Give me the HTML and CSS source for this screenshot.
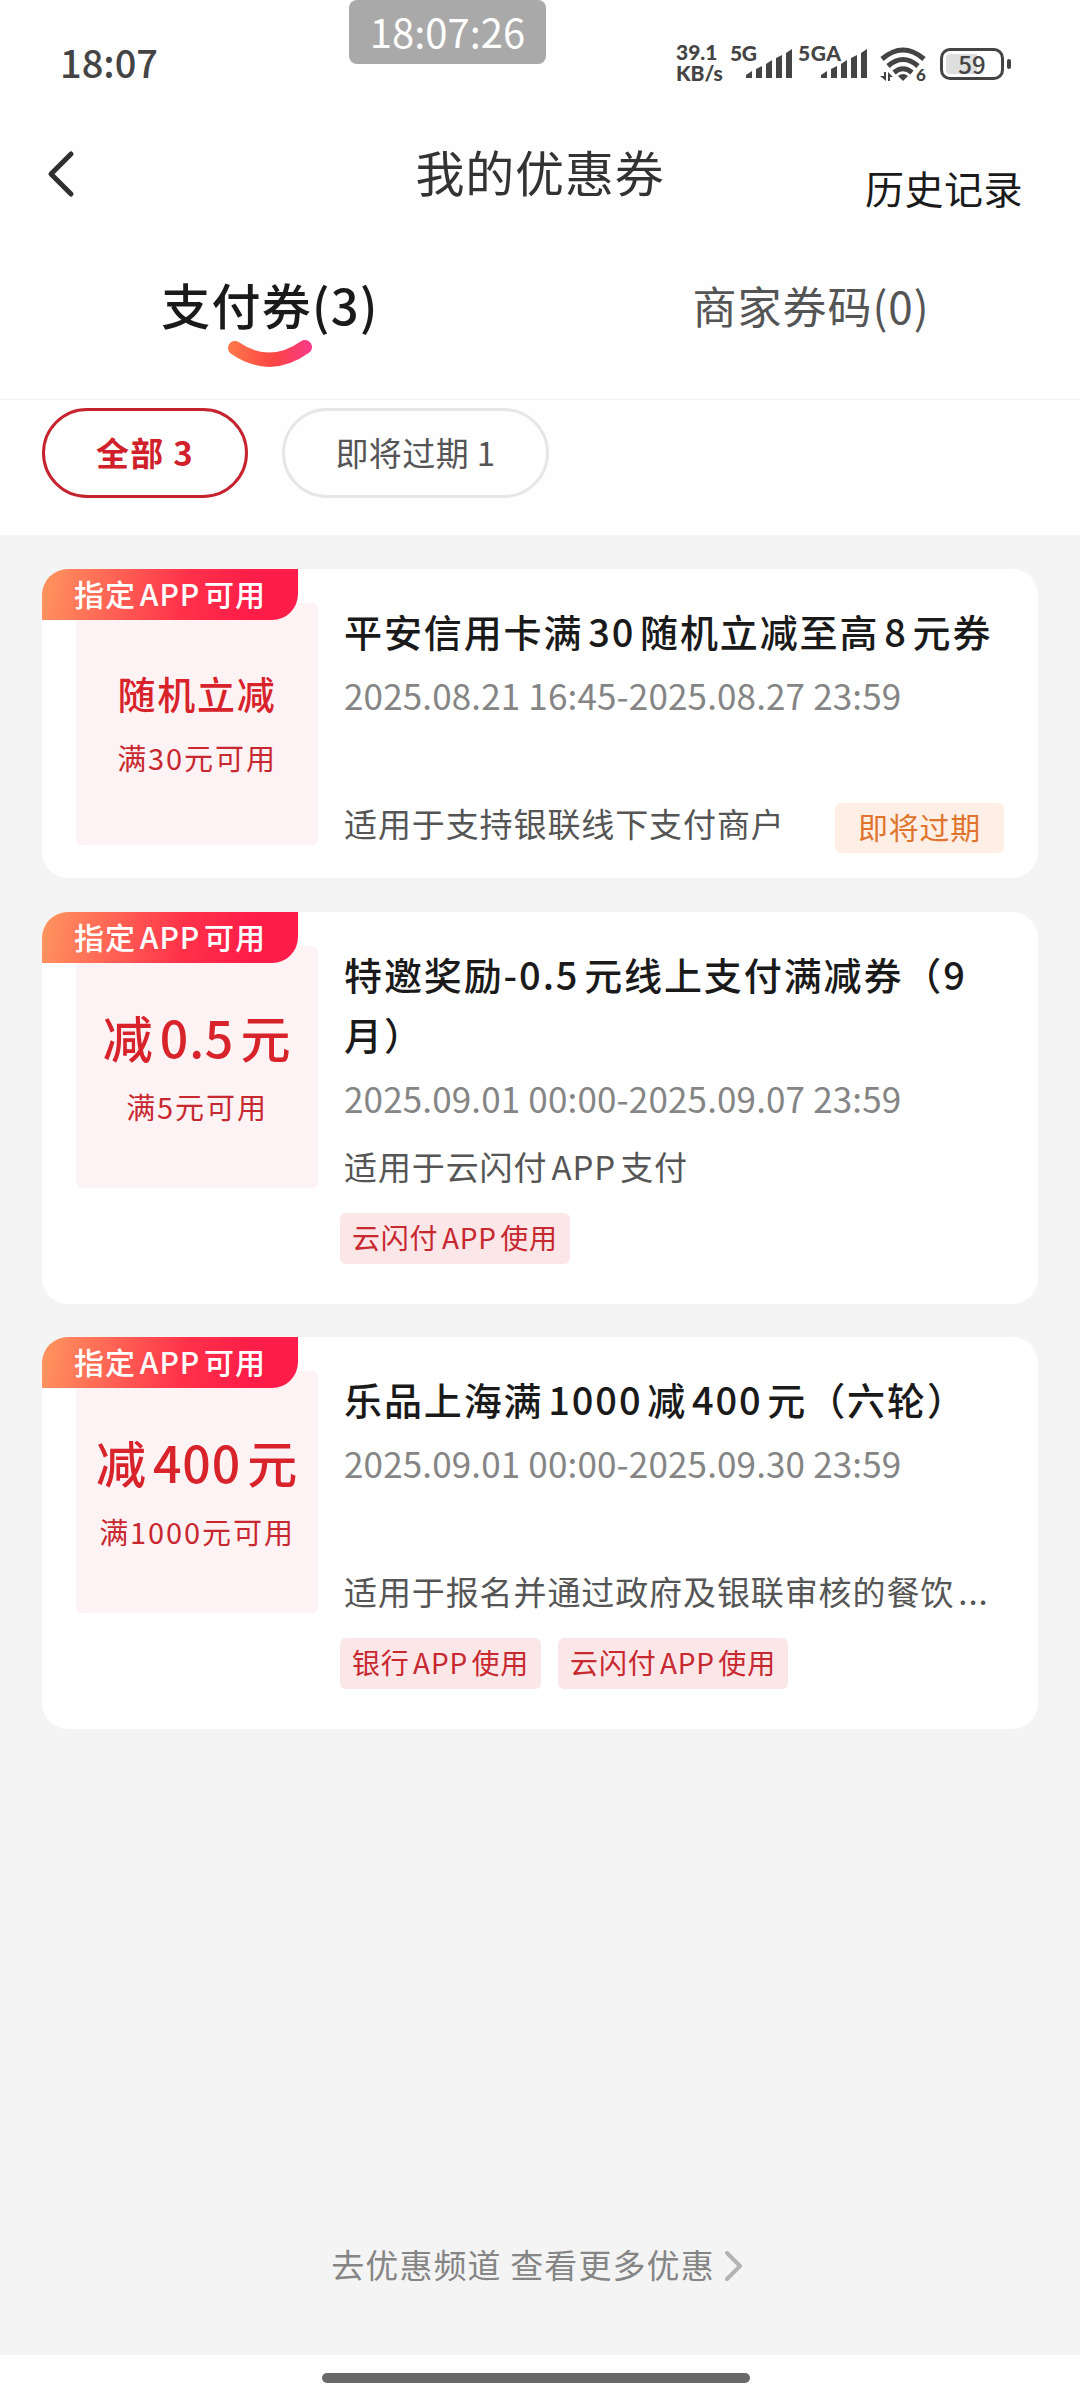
FILE: index.html
```html
<!DOCTYPE html>
<html lang="zh-CN">
<head>
    <meta charset="UTF-8">
    <meta name="viewport" content="width=device-width, initial-scale=1.0">
    <title>我的优惠券</title>
    <link rel="stylesheet" href="styles.css">
</head>
<body>
    <div class="clock-badge">18:07:26</div>

    <div class="status-bar">
        <div class="status-time">18:07</div>
        <div class="status-icons">
            <div class="net-speed"><span>39.1</span><span>KB/s</span></div>
            <svg class="signal" width="63" height="40" viewBox="0 0 63 40">
                <text x="0" y="20" class="net-label" textLength="27">5G</text>
                <path d="M16 37v-3l6-4v7zM26 37V28l6-3v12zM36 37V23l6-4v18zM46 37V17l6-3v23zM56 37V12l6-4v29z" />
            </svg>
            <svg class="signal" width="70" height="40" viewBox="0 0 70 40">
                <text x="0" y="20" class="net-label" textLength="43">5GA</text>
                <path d="M23 37v-3l6-4v7zM33 37V28l6-3v12zM43 37V23l6-4v18zM53 37V17l6-3v23zM63 37V12l6-4v29z" />
            </svg>
            <svg class="wifi" width="48" height="42" viewBox="0 0 48 42">
                <g fill="none" stroke="#444" stroke-width="5">
                    <path d="M2 18Q23 0 44 18" />
                    <path d="M8 25Q23 12 38 25" />
                    <path d="M14 31.5Q23 24 32 31.5" />
                </g>
                <path d="M18 35q5-4 10 0l-5 5z" />
                <path d="M4 31h2v9L0 35h4zM8 40V31l5 5h-3v4z" />
                <text x="36" y="40" class="wifi-gen">6</text>
            </svg>
            <div class="battery"><span>59</span></div>
            <div class="battery-tip"></div>
        </div>
    </div>

    <div class="nav">
        <svg class="back" width="30" height="48" viewBox="0 0 30 48">
            <path d="M26 4L6 24l20 20" fill="none" stroke="#2f2f2f" stroke-width="5" stroke-linecap="round" stroke-linejoin="round" />
        </svg>
        <h1>我的优惠券</h1>
        <a class="history">历史记录</a>
    </div>

    <div class="tabs">
        <div class="tab active">
            <span>支付券(3)</span>
            <svg class="smile" width="86" height="28" viewBox="0 0 86 28">
                <defs>
                    <linearGradient id="smile" gradientUnits="userSpaceOnUse" x1="0" x2="86" y1="0" y2="0">
                        <stop offset="0" stop-color="#ff7a4a" />
                        <stop offset=".55" stop-color="#fb4444" />
                        <stop offset="1" stop-color="#f93a8c" />
                    </linearGradient>
                </defs>
                <path d="M8 8Q43 32 78 7" fill="none" stroke="url(#smile)" stroke-width="14" stroke-linecap="round" />
            </svg>
        </div>
        <div class="tab"><span>商家券码(0)</span></div>
    </div>

    <div class="filters">
        <div class="pill selected">全部 3</div>
        <div class="pill">即将过期 1</div>
    </div>

    <div class="content">
        <div class="coupon">
            <div class="ribbon">指定APP可用</div>
            <div class="amount">
                <div class="value small">随机立减</div>
                <div class="limit">满30元可用</div>
            </div>
            <div class="info">
                <div class="main">
                    <h2>平安信用卡满30随机立减至高8元券</h2>
                    <div class="date">2025.08.21 16:45-2025.08.27 23:59</div>
                    <div class="scope">
                        <span>适用于支持银联线下支付商户</span>
                        <span class="expiring">即将过期</span>
                    </div>
                </div>
            </div>
        </div>

        <div class="coupon">
            <div class="ribbon">指定APP可用</div>
            <div class="amount">
                <div class="value">减0.5元</div>
                <div class="limit">满5元可用</div>
            </div>
            <div class="info">
                <div class="main">
                    <h2>特邀奖励-0.5元线上支付满减券（9月）</h2>
                    <div class="date">2025.09.01 00:00-2025.09.07 23:59</div>
                    <div class="scope"><span>适用于云闪付APP支付</span></div>
                </div>
                <div class="tags">
                    <span class="tag">云闪付APP使用</span>
                </div>
            </div>
        </div>

        <div class="coupon">
            <div class="ribbon">指定APP可用</div>
            <div class="amount">
                <div class="value">减400元</div>
                <div class="limit">满1000元可用</div>
            </div>
            <div class="info">
                <div class="main">
                    <h2>乐品上海满1000减400元（六轮）</h2>
                    <div class="date">2025.09.01 00:00-2025.09.30 23:59</div>
                    <div class="scope"><span>适用于报名并通过政府及银联审核的餐饮...</span></div>
                </div>
                <div class="tags">
                    <span class="tag">银行APP使用</span>
                    <span class="tag">云闪付APP使用</span>
                </div>
            </div>
        </div>

        <div class="more">
            <span>去优惠频道 查看更多优惠</span>
            <svg width="18" height="30" viewBox="0 0 18 30">
                <path d="M2 2l13 13L2 28" fill="none" stroke="#b4b4b4" stroke-width="4" stroke-linecap="round" stroke-linejoin="round" />
            </svg>
        </div>
    </div>

    <div class="home-area"><div class="home-bar"></div></div>
</body>
</html>
```
FILE: styles.css
```css
* {
    box-sizing: border-box;
}

body {
    margin: 0;
    width: 1080px;
    height: 2400px;
    display: flex;
    flex-direction: column;
    font-family: "Noto Sans CJK SC", sans-serif;
    background: #fefefe;
    color: #1a1a1a;
    white-space: nowrap;
    text-autospace: normal;
}

h1, h2 {
    margin: 0;
    font-weight: 400;
}

/* floating clock over the status bar */
.clock-badge {
    position: absolute;
    left: 349px;
    top: 0;
    width: 197px;
    height: 64px;
    line-height: 62px;
    border-radius: 8px;
    background: #a9a9a9;
    color: #fff;
    font-size: 40px;
    text-align: center;
}

.status-bar {
    height: 120px;
    padding: 0 69px 0 60px;
    display: flex;
    justify-content: space-between;
    color: #444;
}

.status-time {
    margin-top: 32px;
    line-height: 60px;
    font-size: 38px;
    font-weight: 500;
}

.status-icons {
    display: flex;
    align-items: flex-start;
    padding-top: 41px;
}

.status-icons svg {
    fill: #444;
    overflow: visible;
}

.net-speed {
    display: flex;
    flex-direction: column;
    width: 54px;
    font: 900 21px/21px Lato, sans-serif;
}

.net-speed span {
    height: 21px;
}

.signal {
    margin-right: 5px;
}

.net-label {
    font: 900 21px Lato, sans-serif;
}

.wifi {
    margin: 0 12px 0 7px;
}

.wifi-gen {
    font: 900 17px Lato, sans-serif;
}

.battery {
    width: 64px;
    height: 32px;
    margin-top: 7px;
    border: 3px solid #444;
    border-radius: 10px;
    padding: 3px;
    font: 500 24px/20px "Noto Sans CJK SC", sans-serif;
    text-align: center;
}

.battery span {
    display: block;
    background: linear-gradient(90deg, #dedede 59%, transparent 59%);
    border-radius: 4px;
}

.battery-tip {
    width: 4px;
    height: 10px;
    margin: 18px 0 0 3px;
    border-radius: 2px;
    background: #444;
}

.nav {
    height: 120px;
    padding: 0 57px 0 57px;
    display: grid;
    grid-template-columns: 1fr auto 1fr;
    align-items: start;
}

.back {
    margin: 30px 0 0 -12px;
}

.nav h1 {
    margin-top: 21px;
    line-height: 60px;
    font-size: 49px;
    letter-spacing: 0.8px;
    color: #333;
}

.history {
    justify-self: end;
    margin-top: 37px;
    line-height: 60px;
    font-size: 39px;
    letter-spacing: 0.5px;
}

.tabs {
    height: 160px;
    border-bottom: 1px solid #f2f2f2;
    display: grid;
    grid-template-columns: 1fr 1fr;
    padding-top: 34px;
}

.tab {
    display: flex;
    flex-direction: column;
    align-items: center;
    line-height: 60px;
    font-size: 44px;
    letter-spacing: 1px;
    color: #555;
    padding: 1px 0 0 2px;
}

.tab.active {
    padding: 0;
    font-size: 49px;
    font-weight: 500;
    letter-spacing: 1.3px;
    color: #1a1a1a;
}

.smile {
    margin-top: 6px;
    overflow: visible;
}

.filters {
    height: 135px;
    padding: 8px 42px 0;
    display: flex;
    gap: 34px;
}

.pill {
    height: 90px;
    width: 267px;
    line-height: 82px;
    border: 3px solid #e6e6e6;
    border-radius: 45px;
    text-align: center;
    font-size: 33px;
    letter-spacing: 0.4px;
    color: #555;
}

.pill.selected {
    width: 206px;
    border-color: #c5242f;
    color: #d0212b;
    font-weight: 700;
    letter-spacing: 1.2px;
}

.content {
    height: 1820px;
    background: #f4f4f4;
    padding: 34px 42px 0;
    display: flex;
    flex-direction: column;
}

.coupon {
    position: relative;
    background: #fff;
    border-radius: 26px;
    margin-bottom: 34px;
    padding: 32px 34px 35px;
    display: flex;
    align-items: flex-start;
}

.coupon:nth-child(2) {
    margin-bottom: 33px;
}

.ribbon {
    position: absolute;
    left: 0;
    top: 0;
    width: 256px;
    height: 51px;
    line-height: 48px;
    border-radius: 26px 0 26px 0;
    background: linear-gradient(100deg, #ff965f 0%, #ff324a 55%, #fe1d48 80%);
    color: #fff;
    font-size: 30px;
    font-weight: 500;
    letter-spacing: 1px;
    text-align: center;
}

.amount {
    width: 242px;
    height: 242px;
    margin: 2px 0 -2px;
    border-radius: 6px;
    background: #fdf2f4;
    text-align: center;
    color: #d8232b;
    padding-top: 60px;
    text-autospace: no-autospace;
}

.value {
    height: 60px;
    line-height: 60px;
    font-size: 50px;
    font-weight: 500;
    letter-spacing: 0.8px;
    text-autospace: normal;
}

.value.small {
    font-size: 38px;
    letter-spacing: 1.7px;
    height: 54px;
}

.limit {
    margin-top: 20px;
    line-height: 40px;
    font-size: 29px;
    letter-spacing: 1.9px;
    color: #c8282f;
}

.info {
    flex: 1;
    min-width: 0;
    padding-left: 26px;
}

.main {
    min-height: 242px;
    display: flex;
    flex-direction: column;
}

.main h2 {
    line-height: 60px;
    font-size: 38px;
    font-weight: 500;
    letter-spacing: 1.9px;
    white-space: normal;
}

.date {
    margin-top: 14px;
    line-height: 40px;
    font-size: 35px;
    letter-spacing: 0.15px;
    color: #858585;
}

.scope {
    margin-top: auto;
    height: 40px;
    line-height: 40px;
    display: flex;
    justify-content: space-between;
    align-items: flex-start;
    font-size: 33px;
    letter-spacing: 0.9px;
    color: #555;
}

.expiring {
    width: 169px;
    height: 50px;
    line-height: 47px;
    border-radius: 6px;
    background: #fdefe6;
    color: #e0742c;
    font-size: 30px;
    letter-spacing: 0.7px;
    text-align: center;
}

.tags {
    display: flex;
    gap: 17px;
    margin: 27px 0 5px -4px;
}

.tag {
    height: 51px;
    line-height: 49px;
    padding: 0 12px;
    border-radius: 6px;
    background: #fbe6e8;
    color: #c8282f;
    font-size: 28px;
    letter-spacing: 0.8px;
}

.more {
    margin: auto 6px 61px 0;
    height: 60px;
    display: flex;
    justify-content: center;
    align-items: center;
    gap: 10px;
    font-size: 33px;
    letter-spacing: 1.1px;
    color: #858585;
}

.more svg {
    margin-top: 4px;
}

.home-area {
    height: 45px;
    padding-top: 18px;
}

.home-bar {
    width: 428px;
    height: 10px;
    margin-left: 322px;
    border-radius: 5px;
    background: #696969;
}
```
